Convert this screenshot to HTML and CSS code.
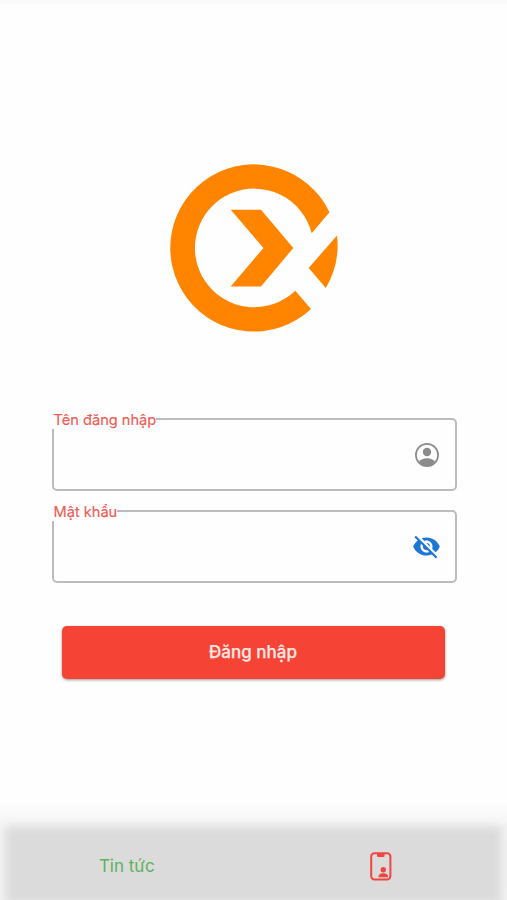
FILE: index.html
```
<!DOCTYPE html>
<html lang="vi">
<head>
<meta charset="utf-8">
<title>Đăng nhập</title>
<link rel="stylesheet" href="styles.css">
</head>
<body>
<main class="login">
  <svg class="logo" viewBox="170 164 168 168" aria-hidden="true">
    <path d="M329.5 212.3A83.6 83.6 0 1 0 311 309L295.3 290.7A59.3 59.3 0 1 1 311.7 233.3Z"/>
    <path d="M337 235.5L308.7 268L325.8 288A83.6 83.6 0 0 0 337 235.5Z"/>
    <path d="M230.7 209.8H261L293.3 248L261 286.4H230.7L263.5 248Z"/>
  </svg>
  <form class="form">
    <div class="field">
      <label class="label" for="user">Tên đăng nhập</label>
      <input class="input" id="user" type="text">
      <svg class="icon account" viewBox="0 0 24 24"><circle cx="12" cy="12" r="11.1" fill="none" stroke="currentColor" stroke-width="1.7"/><circle cx="12" cy="9" r="4.2"/><path d="M4 18.8Q6.5 15.2 12 15.2T20 18.8Q16.5 23 12 23T4 18.8Z"/></svg>
    </div>
    <div class="field">
      <label class="label" for="pass">Mật khẩu</label>
      <input class="input" id="pass" type="password">
      <svg class="icon eye" viewBox="0 0 24 24"><path d="M12 7c2.76 0 5 2.24 5 5 0 .65-.13 1.26-.36 1.83l2.92 2.92c1.51-1.26 2.7-2.89 3.43-4.75-1.73-4.39-6-7.5-11-7.5-1.4 0-2.74.25-3.98.7l2.16 2.16C10.74 7.13 11.35 7 12 7zM2 4.27l2.28 2.28.46.46C3.08 8.3 1.78 10.02 1 12c1.73 4.39 6 7.5 11 7.5 1.55 0 3.03-.3 4.38-.84l.42.42L19.73 22 21 20.73 3.27 3 2 4.27zM7.53 9.8l1.55 1.55c-.05.21-.08.43-.08.65 0 1.66 1.34 3 3 3 .22 0 .44-.03.65-.08l1.55 1.55c-.67.33-1.41.53-2.2.53-2.76 0-5-2.24-5-5 0-.79.2-1.53.53-2.2zm4.31-.78l3.15 3.15.02-.16c0-1.66-1.34-3-3-3l-.17.01z"/></svg>
    </div>
    <button class="submit" type="button">Đăng nhập</button>
  </form>
</main>
<nav class="tabs">
  <a class="tab">Tin tức</a>
  <a class="tab">
    <svg class="phone" viewBox="0 0 22 29"><rect x="1.2" y="1.2" width="19.2" height="26.2" rx="3.2" fill="none" stroke="currentColor" stroke-width="2"/><path d="M7 2H14.6V3.4Q14.6 5 13 5H8.6Q7 5 7 3.4Z"/><circle cx="13.3" cy="17.7" r="2.7"/><path d="M8.6 25.2V24.3Q8.9 21.3 13.3 21.3T18 24.3V25.2Z"/></svg>
  </a>
</nav>
</body>
</html>
```
FILE: styles.css
```
* { box-sizing: border-box; }
body {
  margin: 0;
  height: 900px;
  overflow: hidden;
  display: flex;
  flex-direction: column;
  background: #fefefe;
  border-top: 4px solid #fafafa;
  font-family: Inter, "Noto Sans", sans-serif;
}
.login {
  flex: 1;
  display: flex;
  flex-direction: column;
  align-items: center;
  padding-top: 160px;
}
.logo { width: 168px; height: 168px; fill: #ff8400; }
.form {
  width: 405px;
  margin: 86px 0 0 1px;
  display: flex;
  flex-direction: column;
  gap: 19px;
}
.field {
  position: relative;
  height: 73px;
  display: flex;
  align-items: center;
  padding-right: 16px;
  border: 2px solid #bcbcbc;
  border-radius: 5px;
}
.label {
  position: absolute;
  left: -2px;
  top: -9px;
  height: 18px;
  line-height: 18px;
  padding: 0 0 0 2px;
  background: #fefefe;
  color: #ed5b54;
  font-size: 14.6px;
  -webkit-text-stroke: .15px currentColor;
  white-space: nowrap;
}
.input {
  flex: 1;
  min-width: 0;
  height: 60px;
  border: 0;
  outline: 0;
  background: transparent;
}
.icon { flex: none; fill: currentColor; }
.account { width: 24px; height: 24px; color: #8b8b8b; }
.eye { width: 29px; height: 29px; margin-right: -2px; color: #1b76d5; }
.submit {
  width: 383px;
  height: 53px;
  margin: 24px 12px 0 10px;
  padding: 0 0 2px;
  border: 0;
  border-radius: 5px;
  background: #f54336;
  box-shadow: 0 1px 3px rgba(0, 0, 0, .4);
  color: #ffe9e5;
  font: 500 17px Inter, "Noto Sans", sans-serif;
  -webkit-text-stroke: .25px currentColor;
}
.tabs {
  position: relative;
  height: 96px;
  padding-top: 28px;
  display: flex;
  background: linear-gradient(#fcfcfc, #f5f5f5 24px);
  overflow: hidden;
}
.tabs::before {
  content: "";
  position: absolute;
  inset: 22px 5px -4px;
  background: #dbdbdb;
  filter: blur(5px);
}
.tab {
  position: relative;
  flex: 1;
  display: flex;
  align-items: center;
  justify-content: center;
  color: #5bb35f;
  font-size: 17px;
}
.phone { width: 22px; height: 29px; margin-left: 1px; color: #ef463f; fill: currentColor; }
```
